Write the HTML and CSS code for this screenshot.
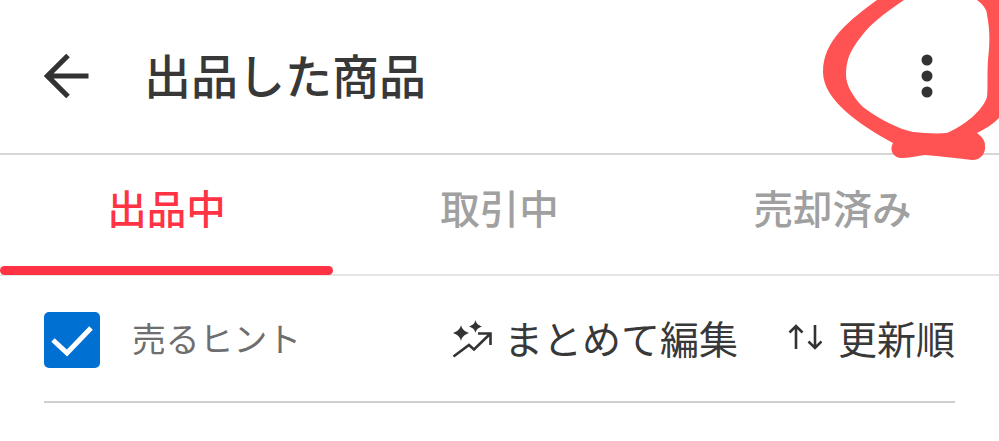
FILE: index.html
```html
<!DOCTYPE html>
<html lang="ja">
<head>
<meta charset="utf-8">
<title>出品した商品</title>
<link rel="stylesheet" href="styles.css">
</head>
<body>
<div class="page">
  <header class="appbar">
    <svg class="back" viewBox="0 0 48 48" width="48" height="48"><path d="M44.500 24H4M24 3.500 3.500 24 24 44.500" fill="none" stroke="#333" stroke-width="5.200"/></svg>
    <h1 class="title">出品した商品</h1>
    <svg class="more" viewBox="0 0 12 44" width="12" height="44"><circle cx="6" cy="6" r="5.500"/><circle cx="6" cy="22" r="5.500"/><circle cx="6" cy="38" r="5.500"/></svg>
  </header>
  <nav class="tabs">
    <div class="tab active">出品中</div>
    <div class="tab">取引中</div>
    <div class="tab">売却済み</div>
  </nav>
  <section class="toolbar">
    <div class="toolbar-row">
      <svg class="check" viewBox="0 0 56 56" width="56" height="56"><rect width="56" height="56" rx="5" fill="#0070d2"/><path d="M9 28 23 41 47 16" fill="none" stroke="#fff" stroke-width="5"/></svg>
      <span class="hint">売るヒント</span>
      <button class="action bulk">
        <svg viewBox="0 0 40 38" width="40" height="38"><path d="M9 5c1 4 3 6 8 8-5 2-7 4-8 8-1-4-3-6-8-8 5-2 7-4 8-8ZM23.500 0c.8 3.500 2.500 5 6.500 6.500-4 1.500-5.700 3-6.500 6.500-.8-3.500-2.500-5-6.500-6.500 4-1.500 5.700-3 6.500-6.500Z" fill="#333"/><path d="M1.500 36.500 17 25l5 4.500L38 14M26 13.500h12.500V25" fill="none" stroke="#333" stroke-width="2.600"/></svg>
        <span>まとめて編集</span>
      </button>
      <button class="action sort">
        <svg viewBox="0 0 34 26" width="34" height="26"><path d="M8 25V2M1.500 8.500 8 2l6.500 6.500M27 1v23M20.500 17.500 27 24l6.500-6.500" fill="none" stroke="#333" stroke-width="2.600"/></svg>
        <span>更新順</span>
      </button>
    </div>
  </section>
  <svg class="scribble" viewBox="0 0 999 441" width="999" height="441"><path fill="#ff5252" d="M877 0C850 20 823 40 823 72C823 100 860 125 893 143C889 150 893 158 902 158C912 158 920 155 925 155C940 156 955 158 972 160C982 160 986 152 985 145C985 140 981 136 977 133C985 129 992 125 999 118V0H977C983 5 987 9 987 15C990 30 990 43 988 60C987 75 988 90 987 97C984 107 970 123 947 133C935 134 925 133 913 132C905 130 899 128 893 125C880 119 871 113 863 107C853 97 846 85 846 75C846 65 848 57 852 50C858 40 866 29 877 20C885 13 895 6 904 0Z"/></svg>
</div>
</body>
</html>
```
FILE: styles.css
```css
* { box-sizing: border-box; }
html, body { margin: 0; padding: 0; background: #fff; }
body { width: 999px; height: 441px; overflow: hidden; font-family: "Noto Sans CJK JP", "Noto Sans", sans-serif; }
.page { position: relative; width: 999px; height: 441px; }
.appbar { height: 155px; border-bottom: 2px solid #d6d6d6; display: flex; align-items: center; padding: 0 66px 2px 44px; }
.back { flex: none; }
.title { flex: 1; margin: 0 0 0 52px; padding-bottom: 4px; font-size: 47px; font-weight: 500; line-height: 1; color: #383838; }
.more { fill: #333; flex: none; }
.tabs { display: grid; grid-template-columns: 333px 333px 333px; height: 121px; border-bottom: 2px solid #e6e6e6; }
.tab { display: flex; justify-content: center; padding-top: 27px; font-size: 39.500px; line-height: 50px; font-weight: 500; color: #a0a0a0; }
.tab.active { color: #ff3344; position: relative; }
.tab.active::after { content: ""; position: absolute; left: 0; right: 0; bottom: -1px; height: 9px; border-radius: 5px; background: #ff3344; }
.toolbar { padding: 0 44px; }
.toolbar-row { height: 127px; display: flex; align-items: center; border-bottom: 2px solid #cfcfcf; padding-bottom: 2px; }
.check { flex: none; margin-top: 4px; }
.hint { margin-left: 32px; font-size: 33.800px; color: #6e6e6e; flex: 1; }
.action { display: flex; align-items: center; border: 0; background: none; padding: 0 0 2px; font: inherit; font-size: 39px; color: #383838; }
.bulk svg { margin: 4px 12px 0 0; }
.sort { margin-left: 50px; }
.sort svg { margin: 0 16px 0 0; }
.scribble { position: absolute; left: 0; top: 0; pointer-events: none; }
```
